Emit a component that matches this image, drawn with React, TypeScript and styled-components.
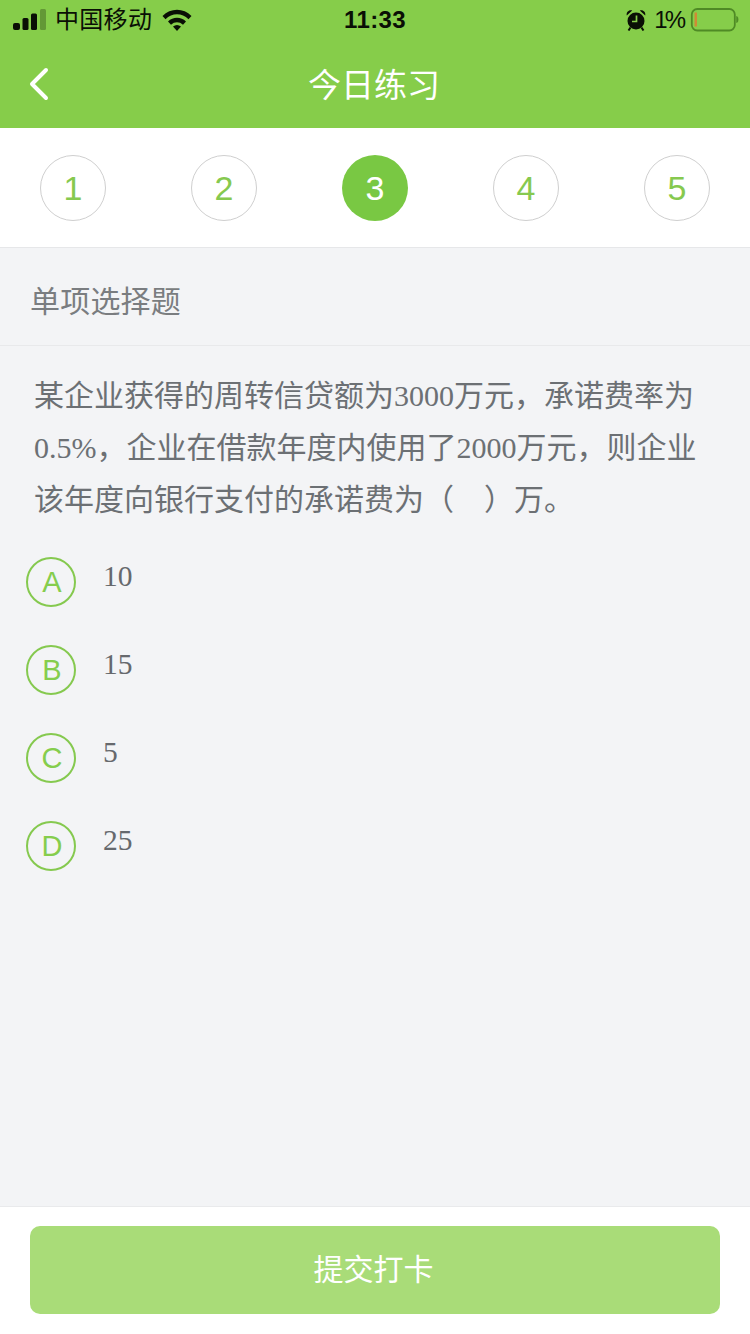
import React from 'react';
import styled, { createGlobalStyle } from 'styled-components';

const Global = createGlobalStyle`
  html, body { margin: 0; padding: 0; background: #f3f4f6; }
  * { box-sizing: border-box; }
`;

const CJK = `"Liberation Serif", "Noto Sans CJK SC", serif`;
const SANS = `"Liberation Sans", "Noto Sans CJK SC", sans-serif`;

const Page = styled.div`
  width: 750px;
  height: 1334px;
  display: flex;
  flex-direction: column;
  background: #f3f4f6;
  overflow: hidden;
`;

const Header = styled.header`
  height: 128px;
  background: #86cd4a;
  display: flex;
  flex-direction: column;
`;

const StatusBar = styled.div`
  height: 40px;
  display: grid;
  grid-template-columns: 1fr auto 1fr;
  align-items: center;
  padding: 0 10px 0 13px;
  color: #0a0f05;
  font-family: ${SANS};
`;

const StatusLeft = styled.div`
  display: flex;
  align-items: center;
  gap: 8px;
`;

const Carrier = styled.span`
  font-size: 24px;
  line-height: 40px;
  letter-spacing: 0.3px;
  margin-right: 2px;
`;

const Clock = styled.span`
  font-size: 24px;
  font-weight: 700;
  letter-spacing: 0.4px;
  margin-right: 3px;
`;

const StatusRight = styled.div`
  display: flex;
  align-items: center;
  justify-content: flex-end;
  gap: 5px;
`;

const Percent = styled.span`
  font-size: 24px;
  letter-spacing: -3px;
  margin-left: 3px;
  margin-right: 2px;
`;

const NavBar = styled.div`
  flex: 1;
  display: flex;
  align-items: center;
  justify-content: center;
  position: relative;
  padding-top: 3px;
`;

const BackButton = styled.div`
  position: absolute;
  left: 28px;
  top: 27px;
  width: 22px;
  height: 34px;
  display: flex;
`;

const Title = styled.h1`
  margin: 0 2px 0 0;
  font: 400 33px/40px ${SANS};
  color: #fff;
`;

const Steps = styled.div`
  height: 120px;
  background: #fff;
  border-bottom: 1px solid #e6e7e9;
  display: flex;
  align-items: center;
  justify-content: space-between;
  padding: 1px 40px 0;
`;

const Step = styled.div<{ $active?: boolean }>`
  width: 66px;
  height: 66px;
  border-radius: 50%;
  display: flex;
  align-items: center;
  justify-content: center;
  font: 400 34px/1 ${SANS};
  color: ${p => (p.$active ? '#fff' : '#86c94f')};
  background: ${p => (p.$active ? '#79c843' : '#fff')};
  border: ${p => (p.$active ? 'none' : '1px solid #cfcfcf')};
`;

const TypeRow = styled.div`
  height: 98px;
  border-bottom: 1px solid #e8e9eb;
  display: flex;
  align-items: center;
  padding: 11px 0 0 30px;
  font: 400 30px/40px ${CJK};
  letter-spacing: 0.2px;
  color: #7a7d80;
`;

const Question = styled.p`
  margin: 0;
  padding: 24px 30px 0 34px;
  font: 400 30px/52px ${CJK};
  color: #6c7074;
`;

const Options = styled.div`
  display: flex;
  flex-direction: column;
  gap: 38px;
  padding: 31px 0 0 26px;
`;

const Option = styled.div`
  display: flex;
  align-items: flex-start;
  height: 50px;
`;

const Badge = styled.div`
  width: 50px;
  height: 50px;
  flex: none;
  border-radius: 50%;
  border: 2px solid #85c94f;
  display: flex;
  align-items: center;
  justify-content: center;
  padding-left: 2px;
  font: 400 29px/1 ${SANS};
  color: #85cd4d;
`;

const OptionText = styled.span`
  margin: 0 0 0 27px;
  font: 400 29.500px/36px "Liberation Serif", serif;
  color: #66696d;
  position: relative;
  top: 1px;
`;

const Spacer = styled.div`
  flex: 1;
`;

const Footer = styled.footer`
  height: 128px;
  background: #fff;
  border-top: 1px solid #e9eaec;
  padding: 19px 30px 20px;
`;

const Submit = styled.button`
  width: 690px;
  height: 88px;
  border: none;
  border-radius: 10px;
  background: #a9dc78;
  color: #fff;
  font: 400 30px/1 ${SANS};
  padding: 0 3px 0 0;
`;

const Signal = () => (
  <svg width="34" height="22" viewBox="0 0 34 22" fill="currentColor">
    <rect x="0" y="14" width="7" height="7" rx="2" />
    <rect x="9.500" y="9" width="6" height="12" rx="1.500" />
    <rect x="18" y="4.500" width="6" height="16.500" rx="1.500" />
    <rect x="27" y="0" width="6" height="21" rx="1.500" opacity=".28" />
  </svg>
);

const Wifi = () => (
  <svg width="30" height="22" viewBox="0 0 30 22" fill="currentColor">
    <path d="M.5 7C8.500-1.500 21.500-1.500 29.500 7L26.500 10.300C20 3.500 10 3.500 3.500 10.300Z" />
    <path d="M6 12.500C11 7.500 19 7.500 24 12.500L21 15.800C17.500 12.500 12.500 12.500 9 15.800Z" />
    <path d="M11 17.500C13.500 15.500 16.500 15.500 19 17.500L15 22Z" />
  </svg>
);

const Alarm = () => (
  <svg width="20" height="22" viewBox="0 0 20 22">
    <circle cx="10" cy="12" r="8.500" fill="currentColor" />
    <path d="M.8 6.500C0 3 3 .4 6.200 1.500ZM19.200 6.500C20 3 17 .4 13.800 1.500Z" fill="currentColor" />
    <path d="M4.500 18.500 2.500 21.500M15.500 18.500 17.500 21.500" stroke="currentColor" strokeWidth="2" />
    <path d="M10.500 6.500V12.500H6" stroke="#86cd4a" strokeWidth="1.700" fill="none" />
  </svg>
);

const Battery = () => (
  <svg width="50" height="24" viewBox="0 0 50 24" fill="none">
    <rect x="1.800" y="1" width="43" height="21.500" rx="5.500" stroke="#4f8a25" strokeWidth="1.800" />
    <rect x="4.500" y="4.500" width="2.500" height="14" fill="#cf8a35" />
    <path d="M46.800 8.500c1.500.5 1.500 5.500 0 6z" fill="#4f8a25" stroke="#4f8a25" />
  </svg>
);

const Chevron = () => (
  <svg width="22" height="34" viewBox="0 0 22 34" fill="none" stroke="#fff" strokeWidth="4" strokeLinecap="round" strokeLinejoin="round">
    <path d="M18 3 4 17l14 14" />
  </svg>
);

const options = [
  { key: 'A', text: '10' },
  { key: 'B', text: '15' },
  { key: 'C', text: '5' },
  { key: 'D', text: '25' },
];

export default function App() {
  return (
    <Page>
      <Global />
      <Header>
        <StatusBar>
          <StatusLeft>
            <Signal />
            <Carrier>中国移动</Carrier>
            <Wifi />
          </StatusLeft>
          <Clock>11:33</Clock>
          <StatusRight>
            <Alarm />
            <Percent>1%</Percent>
            <Battery />
          </StatusRight>
        </StatusBar>
        <NavBar>
          <BackButton><Chevron /></BackButton>
          <Title>今日练习</Title>
        </NavBar>
      </Header>
      <Steps>
        {[1, 2, 3, 4, 5].map(n => (
          <Step key={n} $active={n === 3}>{n}</Step>
        ))}
      </Steps>
      <TypeRow>单项选择题</TypeRow>
      <Question>某企业获得的周转信贷额为3000万元，承诺费率为0.5%，企业在借款年度内使用了2000万元，则企业该年度向银行支付的承诺费为（&nbsp;&nbsp;&nbsp;&nbsp;）万。</Question>
      <Options>
        {options.map(o => (
          <Option key={o.key}>
            <Badge>{o.key}</Badge>
            <OptionText>{o.text}</OptionText>
          </Option>
        ))}
      </Options>
      <Spacer />
      <Footer>
        <Submit>提交打卡</Submit>
      </Footer>
    </Page>
  );
}
